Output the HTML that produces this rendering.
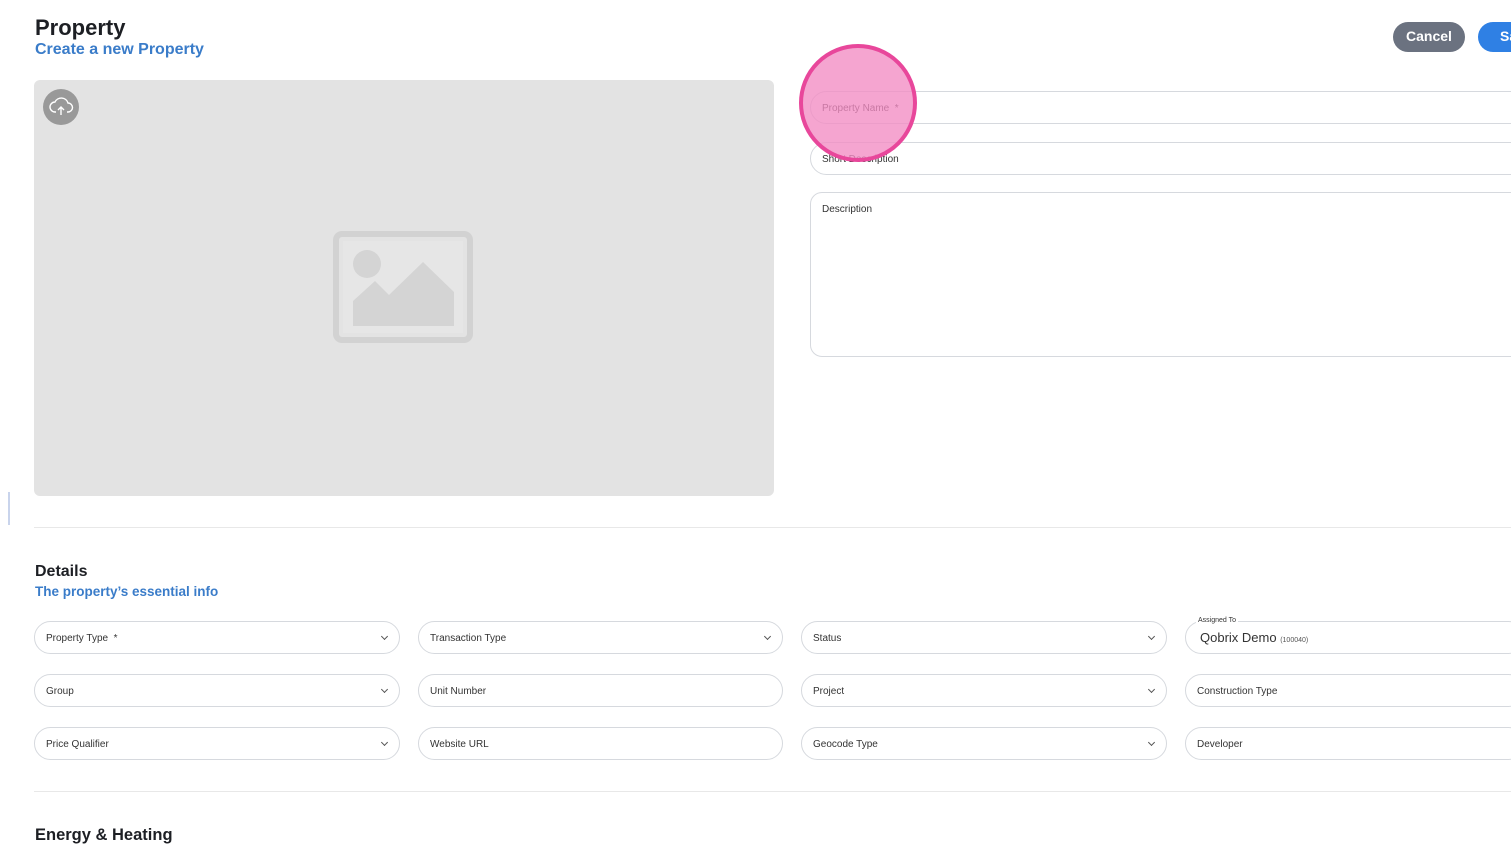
<!DOCTYPE html>
<html><head><style>
*{box-sizing:border-box;margin:0;padding:0}
body{width:1511px;height:844px;overflow:hidden;background:#fff;font-family:"Liberation Sans",Arial,sans-serif;position:relative;color:#222}
.a{position:absolute}
.in{position:absolute;height:33px;border:1px solid #d6d9de;border-radius:17px;font-size:10px;color:#333;padding-left:11px;line-height:33px;background:#fff}
.chev{position:absolute;right:12px;top:12px;width:5px;height:5px;border-right:1.5px solid #555;border-bottom:1.5px solid #555;transform:rotate(45deg)}
.h1{font-size:21px;font-weight:bold;color:#1d1f24}
.sub{font-size:15px;font-weight:bold;color:#3a7cc9}
</style></head><body>
<div class="a h1" style="left:35px;top:15px;font-size:22px">Property</div>
<div class="a sub" style="left:35px;top:41px;font-size:16px">Create a new Property</div>
<div class="a" style="left:1393px;top:22px;width:72px;height:30px;border-radius:15px;background:#6b7280;color:#fff;font-weight:bold;font-size:14px;text-align:center;line-height:28px">Cancel</div>
<div class="a" style="left:1478px;top:22px;width:60px;height:30px;border-radius:15px;background:#2f80e4;color:#fff;font-weight:bold;font-size:14px;line-height:28px;padding-left:22px">Save</div>

<div class="a" style="left:34px;top:80px;width:740px;height:416px;border-radius:6px;background:#e3e3e3"></div>
<div class="a" style="left:43px;top:89px;width:36px;height:36px;border-radius:50%;background:#999">
<svg width="36" height="36" viewBox="0 0 36 36"><path d="M13 23h-1a5 5 0 0 1 0-10 7 7 0 0 1 13 1 4.5 4.5 0 0 1 0 9h-1" fill="none" stroke="#fff" stroke-width="1.4"/><path d="M18 26v-8M15 21l3-3 3 3" fill="none" stroke="#fff" stroke-width="1.4"/></svg></div>
<svg class="a" style="left:333px;top:231px" width="140" height="112" viewBox="0 0 140 112"><rect x="3" y="3" width="134" height="106" rx="6" fill="none" stroke="#d2d2d2" stroke-width="6"/><rect x="10" y="10" width="120" height="92" fill="#e6e6e6"/><circle cx="34" cy="33" r="14" fill="#d4d4d4"/><path d="M20 95V70l22-20 14 14 34-33 31 30v34z" fill="#d4d4d4"/></svg>

<div class="in" style="left:810px;top:91px;width:720px">Property Name &nbsp;*</div>
<div class="in" style="left:810px;top:142px;width:720px">Short Description</div>
<div class="in" style="left:810px;top:192px;width:720px;height:165px;border-radius:12px;line-height:1;padding-top:12px">Description</div>
<div class="a" style="left:799px;top:44px;width:118px;height:118px;border-radius:50%;background:rgba(242,140,195,.78);border:4px solid #e8479b"></div>

<div class="a" style="left:8px;top:492px;width:2px;height:33px;background:#c9d4ec"></div>
<div class="a" style="left:34px;top:527px;width:1477px;height:1px;background:#e8e8e8"></div>

<div class="a h1" style="left:35px;top:563px;font-size:16px">Details</div>
<div class="a sub" style="left:35px;top:584px;font-size:13.5px">The property’s essential info</div>

<div class="in" style="left:34px;top:621px;width:366px">Property Type &nbsp;*<span class="chev"></span></div>
<div class="in" style="left:418px;top:621px;width:365px">Transaction Type<span class="chev"></span></div>
<div class="in" style="left:801px;top:621px;width:366px">Status<span class="chev"></span></div>
<div class="in" style="left:1185px;top:621px;width:340px;font-size:13px;padding-left:14px;line-height:32px">Qobrix Demo <span style="font-size:7px;color:#555">(100040)</span></div>
<div class="a" style="left:1196px;top:617px;font-size:7px;background:#fff;padding:0 2px;color:#333">Assigned To</div>

<div class="in" style="left:34px;top:674px;width:366px">Group<span class="chev"></span></div>
<div class="in" style="left:418px;top:674px;width:365px">Unit Number</div>
<div class="in" style="left:801px;top:674px;width:366px">Project<span class="chev"></span></div>
<div class="in" style="left:1185px;top:674px;width:340px">Construction Type</div>

<div class="in" style="left:34px;top:727px;width:366px">Price Qualifier<span class="chev"></span></div>
<div class="in" style="left:418px;top:727px;width:365px">Website URL</div>
<div class="in" style="left:801px;top:727px;width:366px">Geocode Type<span class="chev"></span></div>
<div class="in" style="left:1185px;top:727px;width:340px">Developer</div>

<div class="a" style="left:34px;top:791px;width:1477px;height:1px;background:#e8e8e8"></div>
<div class="a h1" style="left:35px;top:826px;font-size:16.5px">Energy &amp; Heating</div>
</body></html>
